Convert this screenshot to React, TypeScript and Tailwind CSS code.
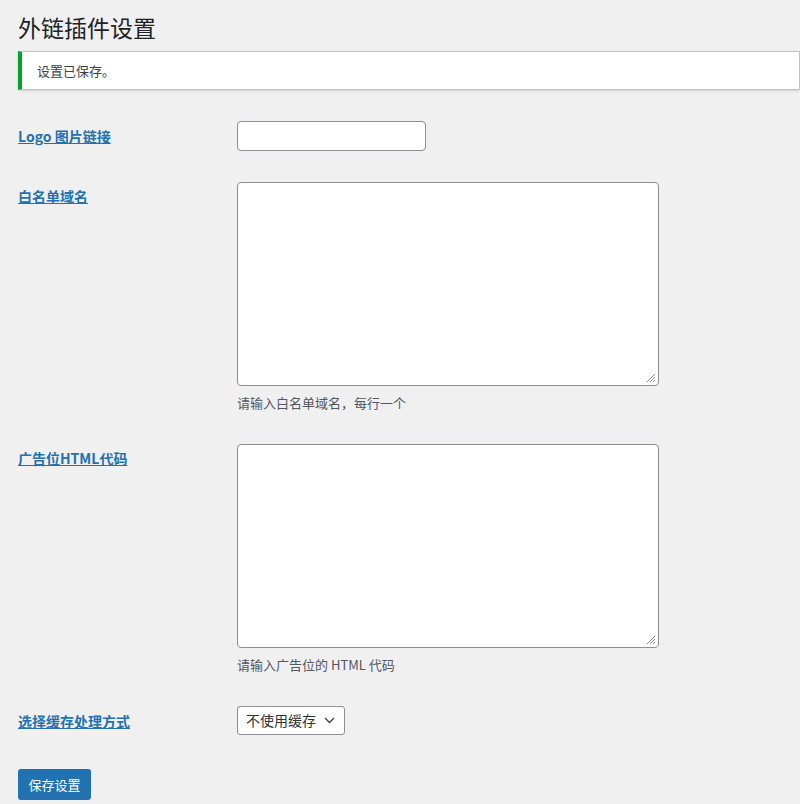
const FONT = { fontFamily: '"Noto Sans CJK SC", "Liberation Sans", sans-serif' };

const Label = ({ children }: { children: React.ReactNode }) => (
  <div className="w-[219px] shrink-0 text-[14px] font-semibold text-[#2271b1] underline leading-[20px]">
    {children}
  </div>
);

const Grip = () => (
  <svg className="absolute right-[2px] bottom-[2px]" width="12" height="12" viewBox="0 0 12 12">
    <path d="M11 3L3 11M11 6L6 11M11 9L9 11" stroke="#8a8a8a" strokeWidth="1" />
  </svg>
);

export default function App() {
  return (
    <div className="min-h-[804px] bg-[#f0f0f1] pl-[18px] text-[#3c434a]" style={FONT}>
      <h1 className="pt-[12px] text-[23px] leading-[30px] text-[#1d2327]">外链插件设置</h1>
      <div className="mt-[9px] flex h-[39px] items-center border border-l-4 border-[#c3c4c7] border-l-[#00a32a] bg-white pl-[15px] text-[13px] shadow-sm">
        设置已保存。
      </div>

      <div className="mt-[31px] flex items-center">
        <Label>Logo 图片链接</Label>
        <div className="h-[30px] w-[189px] rounded-[4px] border border-[#8c8f94] bg-white" />
      </div>

      <div className="mt-[31px] flex">
        <div className="pt-[4px]"><Label>白名单域名</Label></div>
        <div>
          <div className="relative h-[204px] w-[422px] rounded-[4px] border border-[#8c8f94] bg-white"><Grip /></div>
          <p className="mt-[8px] text-[13px] leading-[18px] text-[#50575e]">请输入白名单域名，每行一个</p>
        </div>
      </div>

      <div className="mt-[32px] flex">
        <div className="pt-[4px]"><Label>广告位HTML代码</Label></div>
        <div>
          <div className="relative h-[204px] w-[422px] rounded-[4px] border border-[#8c8f94] bg-white"><Grip /></div>
          <p className="mt-[8px] text-[13px] leading-[18px] text-[#50575e]">请输入广告位的 HTML 代码</p>
        </div>
      </div>

      <div className="mt-[32px] flex items-center">
        <Label>选择缓存处理方式</Label>
        <div className="flex h-[29px] w-[108px] items-center justify-between rounded-[3px] border border-[#8c8f94] bg-white pl-[8px] pr-[9px] text-[14px] text-[#2c3338]">
          不使用缓存
          <svg width="11" height="7" viewBox="0 0 11 7"><path d="M1 1l4.5 4.5L10 1" fill="none" stroke="#3c434a" strokeWidth="1.4" /></svg>
        </div>
      </div>

      <button className="mt-[34px] h-[31px] w-[73px] rounded-[3px] bg-[#2271b1] text-[13px] text-white">保存设置</button>
    </div>
  );
}
